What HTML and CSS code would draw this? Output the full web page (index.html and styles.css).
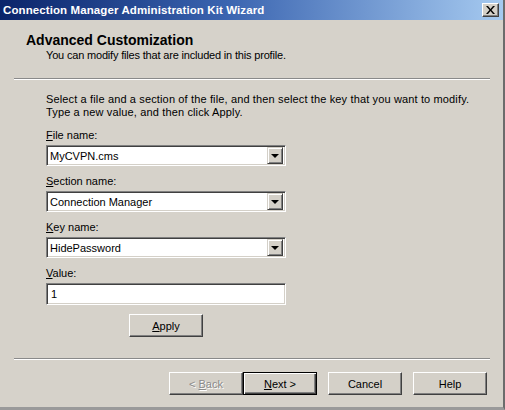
FILE: index.html
```html
<!DOCTYPE html>
<html>
<head>
<meta charset="utf-8">
<link rel="stylesheet" href="styles.css">
</head>
<body>
<div class="window">
  <div class="titlebar">
    <span class="title">Connection Manager Administration Kit Wizard</span>
    <span class="close"><svg width="9" height="8" viewBox="0 0 9 8"><path d="M0 0h2l2.5 3 2.5-3h2l-3.5 4 3.5 4h-2l-2.5-3-2.5 3h-2l3.5-4z" fill="#000"/></svg></span>
  </div>
  <div class="header">
    <div class="h-title">Advanced Customization</div>
    <div class="h-sub">You can modify files that are included in this profile.</div>
  </div>
  <div class="sep"></div>
  <div class="content">
    <p class="intro">Select a file and a section of the file, and then select the key that you want to modify.<br>Type a new value, and then click Apply.</p>
    <div class="field">
      <div class="label"><u>F</u>ile name:</div>
      <div class="combo"><span class="combo-text">MyCVPN.cms</span><span class="drop"><span class="tri"></span></span></div>
    </div>
    <div class="field">
      <div class="label"><u>S</u>ection name:</div>
      <div class="combo"><span class="combo-text">Connection Manager</span><span class="drop"><span class="tri"></span></span></div>
    </div>
    <div class="field">
      <div class="label"><u>K</u>ey name:</div>
      <div class="combo"><span class="combo-text">HidePassword</span><span class="drop"><span class="tri"></span></span></div>
    </div>
    <div class="field">
      <div class="label"><u>V</u>alue:</div>
      <div class="textbox">1</div>
    </div>
    <div class="apply-row"><span class="btn"><u>A</u>pply</span></div>
  </div>
  <div class="sep"></div>
  <div class="footer">
    <span class="btn disabled">&lt;&nbsp;<u>B</u>ack</span>
    <span class="btn default"><u>N</u>ext&nbsp;&gt;</span>
    <span class="btn gap">Cancel</span>
    <span class="btn gap">Help</span>
  </div>
</div>
</body>
</html>
```

FILE: styles.css
```css
* { box-sizing: border-box; }
html, body { margin: 0; padding: 0; background: #d4d0c8; }
body { font-family: "Liberation Sans", Arial, sans-serif; font-size: 11px; color: #000; }

.window {
  width: 505px;
  height: 410px;
  background: #d6d2ca;
  display: flex;
  flex-direction: column;
  border-right: 2px solid #6c6c6c;
  border-bottom: 3px solid #9a9a9a;
  overflow: hidden;
}

.titlebar {
  height: 20px;
  flex: none;
  display: flex;
  align-items: center;
  justify-content: space-between;
  padding: 0 4px 0 3px;
  background: linear-gradient(to right, #0a246a 0%, #3a64b0 45%, #a6caf0 100%);
}
.title {
  color: #fff;
  font-weight: bold;
  font-size: 11.5px;
  letter-spacing: 0.1px;
}
.close {
  width: 17px;
  height: 14px;
  background: #d4d0c8;
  display: flex;
  align-items: center;
  justify-content: center;
  border-top: 1px solid #fff;
  border-left: 1px solid #fff;
  border-right: 1px solid #404040;
  border-bottom: 1px solid #404040;
  box-shadow: inset -1px -1px 0 #808080;
}

.header {
  height: 58px;
  flex: none;
  padding: 12px 0 0 26px;
}
.h-title {
  font-size: 14px;
  font-weight: bold;
  line-height: 16px;
}
.h-sub {
  margin: 1px 0 0 20px;
  line-height: 13px;
  letter-spacing: -0.18px;
}

.sep {
  flex: none;
  height: 2px;
  margin: 0 13px 0 14px;
  border-top: 1px solid #8a8a8a;
  border-bottom: 1px solid #fff;
}

.content {
  flex: none;
  height: 278px;
  padding: 13px 0 0 46px;
  display: flex;
  flex-direction: column;
}
.intro {
  margin: 0 0 10px 0;
  line-height: 13px;
  letter-spacing: 0.14px;
}
.field {
  width: 240px;
  margin-bottom: 9px;
}
.label {
  line-height: 13px;
  margin-bottom: 3px;
}
.combo, .textbox {
  background: #fff;
  border-top: 1px solid #808080;
  border-left: 1px solid #808080;
  border-right: 1px solid #fff;
  border-bottom: 1px solid #fff;
  box-shadow: inset 1px 1px 0 #404040, inset -1px -1px 0 #d4d0c8;
}
.combo {
  height: 21px;
  display: flex;
  align-items: center;
  padding: 2px;
}
.combo-text {
  flex: 1;
  padding-left: 1px;
}
.drop {
  width: 16px;
  height: 17px;
  background: #d4d0c8;
  display: flex;
  align-items: center;
  justify-content: center;
  border-top: 1px solid #d4d0c8;
  border-left: 1px solid #d4d0c8;
  border-right: 1px solid #404040;
  border-bottom: 1px solid #404040;
  box-shadow: inset 1px 1px 0 #fff, inset -1px -1px 0 #808080;
}
.tri {
  width: 0;
  height: 0;
  border-left: 4px solid transparent;
  border-right: 4px solid transparent;
  border-top: 4px solid #000;
}
.textbox {
  height: 22px;
  padding: 3px 4px;
  line-height: 14px;
}
.field:last-of-type { margin-bottom: 11px; }

.apply-row {
  padding-left: 83px;
}
.btn {
  display: inline-flex;
  align-items: center;
  justify-content: center;
  width: 74px;
  height: 23px;
  background: #d4d0c8;
  border-top: 1px solid #fff;
  border-left: 1px solid #fff;
  border-right: 1px solid #404040;
  border-bottom: 1px solid #404040;
  box-shadow: inset -1px -1px 0 #808080;
}
.btn.default {
  border: 1px solid #000;
  box-shadow: inset 1px 1px 0 #fff, inset -1px -1px 0 #404040, inset -2px -2px 0 #808080;
}
.btn.disabled {
  color: #8a8a8a;
  text-shadow: 1px 1px 0 #fff;
}
.btn.gap { margin-left: 11px; }
.footer {
  flex: none;
  display: flex;
  padding: 12px 0 0 169px;
}
```
